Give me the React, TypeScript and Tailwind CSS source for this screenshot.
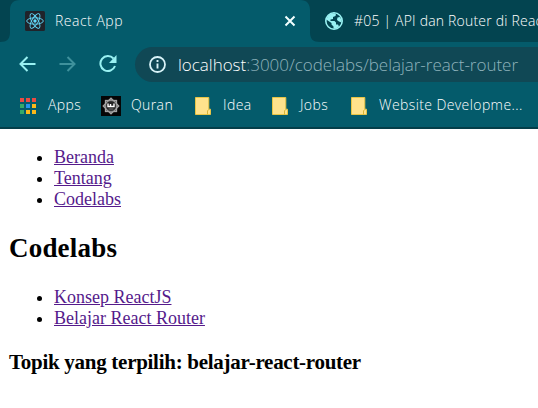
import React from "react";

const ui = "font-['Open_Sans','Noto_Sans',sans-serif] font-light whitespace-nowrap";

function ReactLogo() {
  return (
    <svg className="block size-5 shrink-0" viewBox="0 0 20 20">
      <rect width="20" height="20" rx="1.5" fill="#20232a" />
      <g fill="none" stroke="#61dafb" strokeWidth="0.9">
        <ellipse cx="10" cy="10" rx="8.3" ry="3.2" />
        <ellipse cx="10" cy="10" rx="8.3" ry="3.2" transform="rotate(60 10 10)" />
        <ellipse cx="10" cy="10" rx="8.3" ry="3.2" transform="rotate(120 10 10)" />
      </g>
      <circle cx="10" cy="10" r="1.7" fill="#61dafb" />
    </svg>
  );
}

function Globe() {
  return (
    <svg className="block size-[18px] shrink-0" viewBox="0 0 18 18">
      <circle cx="9" cy="9" r="8.2" fill="#034450" stroke="#99f1f2" strokeWidth="1.6" />
      <path d="M2 6C3 3 6 1 9.500 1.200L11 2.500C11 4 9.500 4.500 8 5V7L5.500 7.500V9H9.500L11 10.500V12.500H13L14 14.500C12.500 16 10.500 17 8.500 16.800V14.500L6.500 12.500V11L2 8Z" fill="#99f1f2" />
      <path d="M12.500 5.500L15 5L16.500 8V10.500L14 9.500L12 8Z" fill="#99f1f2" />
    </svg>
  );
}

function AppsGrid() {
  const colors = ["#ea4b43", "#ea4b43", "#ea4b43", "#35a968", "#2394ef", "#fbb91b", "#35a968", "#fbb91b", "#fbb91b"];
  return (
    <span className="grid w-4 shrink-0 grid-cols-3 gap-[2px]">
      {colors.map((c, i) => (
        <span key={i} className="h-[4px] w-[4px]" style={{ backgroundColor: c }} />
      ))}
    </span>
  );
}

function QuranIcon() {
  return (
    <svg className="block size-5 shrink-0" viewBox="0 0 20 20">
      <rect width="20" height="20" fill="#050505" />
      <g fill="none" stroke="#a5a5a5" strokeWidth="1.5">
        <rect x="4.6" y="4.6" width="10.8" height="10.8" />
        <rect x="4.6" y="4.6" width="10.8" height="10.8" transform="rotate(45 10 10)" />
      </g>
      <circle cx="10" cy="10" r="5.2" fill="#222" stroke="#777" strokeWidth=".6" />
      <path d="M7 7.500V10.500H9.500V8M9.500 10.500H13V7.500" fill="none" stroke="#fff" strokeWidth="1.4" />
      <path d="M7.500 13h5" stroke="#777" />
    </svg>
  );
}

function Folder() {
  return (
    <svg className="block h-[18px] w-4 shrink-0" viewBox="0 0 16 18">
      <path d="M.5.5h13.300v11.700h1.700v5.300H.5Z" fill="#ffe28c" stroke="#e8c545" />
      <path d="M13.500 12.500l-1 1.500v3.500" fill="none" stroke="#d7b438" />
    </svg>
  );
}

function Tabs() {
  return (
    <div className="flex h-[42px] bg-[#034450]">
      <svg className="block h-[42px] w-5 shrink-0" viewBox="0 0 20 42">
        <path d="M0 42C7 42 10 39 10 32V10C10 4 13 0 20 0V42Z" fill="#045b6b" />
      </svg>
      <div className="flex h-[42px] w-[280px] items-center bg-[#045b6b] pl-[5px]">
        <ReactLogo />
        <span className={`${ui} ml-[10px] text-[14px] leading-5 tracking-[0.5px] text-white`}>React App</span>
        <svg className="ml-auto mr-[4px] block size-[12px]" viewBox="0 0 12 12">
          <path d="M1.500 1.500l9 9m0-9l-9 9" stroke="#f2ffff" strokeWidth="2" />
        </svg>
      </div>
      <svg className="block h-[42px] w-5 shrink-0" viewBox="0 0 20 42">
        <path d="M0 0C7 0 10 4 10 10V32C10 39 13 42 20 42H0Z" fill="#045b6b" />
      </svg>
      <div className="flex h-[42px] flex-1 items-center overflow-hidden pl-[5px]">
        <Globe />
        <span className={`${ui} ml-[11px] text-[14px] leading-5 tracking-[0.2px] text-white`}>#05 | API dan Router di Reac</span>
      </div>
    </div>
  );
}

function Toolbar() {
  return (
    <div className="flex h-[44px] items-center">
      <svg className="ml-[19px] block h-4 w-[17px]" viewBox="0 0 17 16" fill="none" stroke="#99f1f2" strokeWidth="2">
        <path d="M16.500 8H2M8.500 1L1.500 8l7 7" />
      </svg>
      <svg className="ml-[23px] block h-4 w-[17px]" viewBox="0 0 17 16" fill="none" stroke="#3f919c" strokeWidth="2">
        <path d="M.5 8H15M8.500 1l7 7-7 7" />
      </svg>
      <svg className="ml-[23px] block h-[18px] w-[18px]" viewBox="0 0 18 18">
        <path d="M14.500 3.500A7.500 7.500 0 1 0 16 11" fill="none" stroke="#99f1f2" strokeWidth="2" />
        <path d="M17.500 0v8H10Z" fill="#99f1f2" />
      </svg>
      <div className="ml-[18px] mt-[1px] flex h-[35px] flex-1 items-center overflow-hidden rounded-l-full bg-[#104855] pl-[14px]">
        <svg className="block size-[17px] shrink-0" viewBox="0 0 17 17">
          <circle cx="8.5" cy="8.5" r="7.5" fill="none" stroke="#d9f3f8" strokeWidth="1.8" />
          <path d="M8.500 4v2M8.500 7.500v5" stroke="#d9f3f8" strokeWidth="1.9" />
        </svg>
        <span className={`${ui} ml-[12px] text-[17px] leading-6 tracking-[-0.02px] text-[#8fb3bc]`}>
          <span className="text-white">localhost</span>:3000/codelabs/belajar-react-router
        </span>
      </div>
    </div>
  );
}

function Bookmarks() {
  const label = `${ui} pb-[2px] text-[14px] leading-5 tracking-[0.4px] text-white shrink-0`;
  return (
    <div className="flex h-[40px] items-center overflow-hidden pl-5">
      <AppsGrid />
      <span className={`${label} ml-[12px] w-[53px]`}>Apps</span>
      <QuranIcon />
      <span className={`${label} ml-[10px] w-[64px]`}>Quran</span>
      <Folder />
      <span className={`${label} ml-[12px] w-[49px]`}>Idea</span>
      <Folder />
      <span className={`${label} ml-[12px] w-[51px]`}>Jobs</span>
      <Folder />
      <span className={`${label} ml-[12px]`}>Website Developme...</span>
    </div>
  );
}

function Links({ items }: { items: string[] }) {
  return (
    <ul className="list-disc pl-[45px] text-[18px] leading-[21px]">
      {items.map((item) => (
        <li key={item}>
          <a className="text-[#551a8b] underline" href="#">{item}</a>
        </li>
      ))}
    </ul>
  );
}

export default function App() {
  return (
    <div className="h-[408px] w-[538px] overflow-hidden bg-white">
      <header className="h-[129px] border-b-2 border-[#043e49] bg-[#045b6b]">
        <Tabs />
        <Toolbar />
        <Bookmarks />
      </header>
      <main className="px-[9px] pt-[18px] font-['Liberation_Serif',serif] text-black">
        <Links items={["Beranda", "Tentang", "Codelabs"]} />
        <h2 className="mt-[22px] text-[27px] font-bold leading-[32px] tracking-[0.2px]">Codelabs</h2>
        <div className="mt-[23px]">
          <Links items={["Konsep ReactJS", "Belajar React Router"]} />
        </div>
        <h3 className="mt-[21px] text-[21px] font-bold leading-6 tracking-[-0.28px]">Topik yang terpilih: belajar-react-router</h3>
      </main>
    </div>
  );
}
